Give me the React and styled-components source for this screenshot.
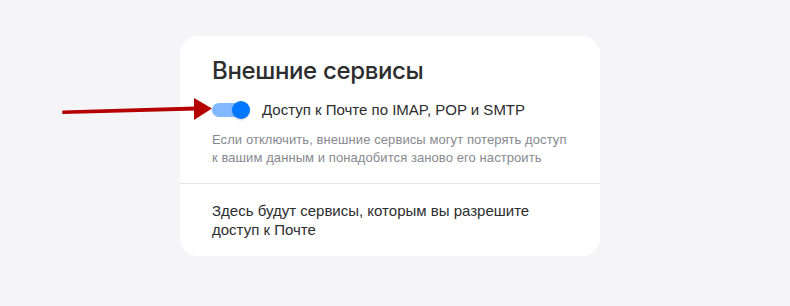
import React from "react";
import styled, { createGlobalStyle } from "styled-components";

const Global = createGlobalStyle`
  html, body { margin: 0; padding: 0; background: #f5f5f7; }
  body { font-family: "Liberation Sans", Arial, sans-serif; }
  * { box-sizing: border-box; }
`;

const Page = styled.div`
  position: relative;
  width: 790px;
  height: 306px;
  padding: 36px 0 0 180px;
`;

const Card = styled.div`
  width: 420px;
  background: #ffffff;
  border-radius: 18px;
  display: flex;
  flex-direction: column;
`;

const Section = styled.div`
  padding: ${(p) => p.$pad};
  display: flex;
  flex-direction: column;
`;

const Divider = styled.div`
  height: 1px;
  background: #e3e4e6;
`;

const Title = styled.h2`
  margin: 0;
  font-family: Inter, "Noto Sans", sans-serif;
  font-weight: 500;
  font-size: 24px;
  line-height: 32px;
  color: #2c2d2e;
  letter-spacing: -0.35px;
`;

const Row = styled.label`
  margin-top: 11px;
  display: flex;
  align-items: center;
  gap: 12px;
  height: 24px;
`;

const Toggle = styled.span`
  position: relative;
  width: 38px;
  height: 20px;
  display: inline-flex;
  align-items: center;
  flex: none;
`;

const Track = styled.span`
  width: 36px;
  height: 14px;
  border-radius: 7px;
  background: #80b9ff;
`;

const Knob = styled.span`
  position: absolute;
  right: 0;
  top: 1px;
  width: 18px;
  height: 18px;
  border-radius: 50%;
  background: #0077ff;
  box-shadow: 0 1px 2px rgba(0, 0, 0, 0.18);
`;

const Label = styled.span`
  font-size: 15px;
  line-height: 20px;
  color: #2c2d2e;
`;

const Hint = styled.p`
  margin: 9px 0 0;
  font-size: 13px;
  line-height: 18px;
  color: #87898f;
  letter-spacing: 0.08px;
`;

const Text = styled.p`
  margin: 0;
  font-size: 15px;
  line-height: 19px;
  color: #2c2d2e;
`;

const Overlay = styled.svg`
  position: absolute;
  left: 0;
  top: 0;
  pointer-events: none;
`;

export default function App() {
  return (
    <>
      <Global />
      <Page>
        <Card>
          <Section $pad="19px 32px 16px">
            <Title>Внешние сервисы</Title>
            <Row>
              <Toggle>
                <Track />
                <Knob />
              </Toggle>
              <Label>Доступ к Почте по IMAP, POP и SMTP</Label>
            </Row>
            <Hint>
              Если отключить, внешние сервисы могут потерять доступ
              <br />к вашим данным и понадобится заново его настроить
            </Hint>
          </Section>
          <Divider />
          <Section $pad="17px 32px 17px">
            <Text>
              Здесь будут сервисы, которым вы разрешите
              <br />доступ к Почте
            </Text>
          </Section>
        </Card>
        <Overlay width="790" height="306" viewBox="0 0 790 306">
          <path
            d="M63 111.2 L196 107.2 L196 109.6 L63 113.2 Z"
            fill="#b50000"
            stroke="#b50000"
            strokeWidth="1.6"
            strokeLinejoin="round"
          />
          <path d="M194 98 L212 108.6 L194 120 Z" fill="#b50000" />
        </Overlay>
      </Page>
    </>
  );
}
